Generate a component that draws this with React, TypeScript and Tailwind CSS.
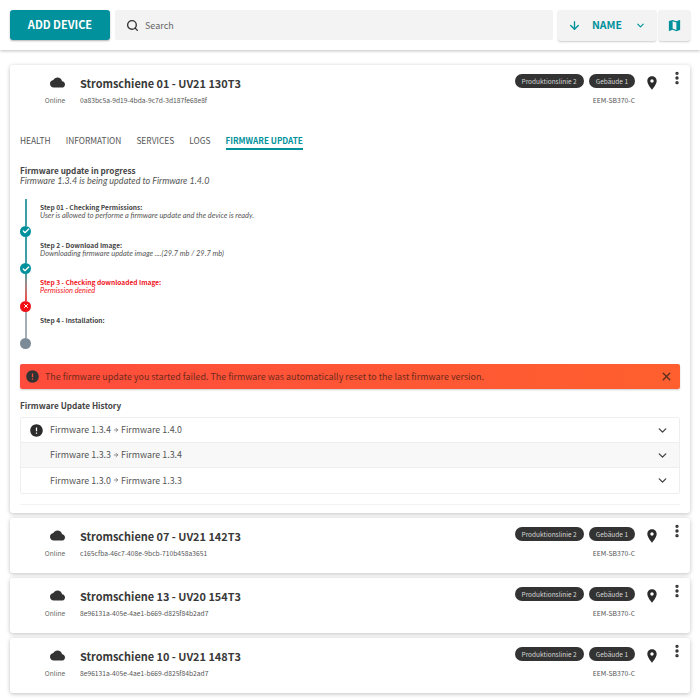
import React from "react";
import { Search, ArrowDown, ArrowRight, ChevronDown, X, Check, EllipsisVertical } from "lucide-react";

const Cloud = ({ className }: { className?: string }) => (
  <svg viewBox="0 0 24 24" className={className} fill="currentColor">
    <path d="M19.35 10.04C18.67 6.59 15.64 4 12 4 9.11 4 6.6 5.64 5.35 8.04 2.34 8.36 0 10.91 0 14c0 3.31 2.69 6 6 6h13c2.76 0 5-2.24 5-5 0-2.64-2.05-4.78-4.65-4.96z" />
  </svg>
);
const Pin = ({ className }: { className?: string }) => (
  <svg viewBox="0 0 24 24" className={className} fill="currentColor">
    <path d="M12 2C8.13 2 5 5.13 5 9c0 5.25 7 13 7 13s7-7.75 7-13c0-3.87-3.13-7-7-7zm0 9.5c-1.38 0-2.5-1.12-2.5-2.5s1.12-2.5 2.5-2.5 2.5 1.12 2.5 2.5-1.12 2.5-2.5 2.5z" />
  </svg>
);
const MapIcon = ({ className }: { className?: string }) => (
  <svg viewBox="0 0 24 24" className={className} fill="currentColor">
    <path d="M20.5 3l-.16.03L15 5.1 9 3 3.36 4.9c-.21.07-.36.25-.36.48V20.5c0 .28.22.5.5.5l.16-.03L9 18.9l6 2.1 5.64-1.9c.21-.07.36-.25.36-.48V3.5c0-.28-.22-.5-.5-.5zM15 19l-6-2.11V5l6 2.11V19z" />
  </svg>
);
const Alert = ({ className }: { className?: string }) => (
  <svg viewBox="0 0 24 24" className={className} fill="currentColor">
    <path d="M12 2C6.48 2 2 6.48 2 12s4.48 10 10 10 10-4.48 10-10S17.52 2 12 2zm1 15h-2v-2h2v2zm0-4h-2V7h2v6z" />
  </svg>
);
const Dots = () => <EllipsisVertical className="w-[16px] h-[16px] text-[#2b2b2b]" strokeWidth={3} />;

function Header({ name, id }: { name: string; id: string }) {
  return (
    <div className="flex h-[55px] items-start">
      <div className="w-[70px] pt-[10px] flex flex-col items-center shrink-0">
        <Cloud className="w-[15px] h-[15px] text-[#333] ml-[25px]" />
        <div className="text-[6.6px] text-[#666] ml-[20px] mt-[4px] leading-[12px]">Online</div>
      </div>
      <div className="pt-[9px] flex-1">
        <div className="text-[10.9px] font-bold text-[#383838] leading-[18px]">{name}</div>
        <div className="text-[6.7px] text-[#555] leading-[12px] mt-[2px]">{id}</div>
      </div>
      <div className="pt-[9px] flex flex-col items-end">
        <div className="flex gap-[5px]">
          <span className="h-[14px] px-[7px] rounded-full bg-[#333] text-[#d5d5d5] text-[6.5px] leading-[14px]">Produktionslinie 2</span>
          <span className="h-[14px] px-[7px] rounded-full bg-[#333] text-[#d5d5d5] text-[6.5px] leading-[14px]">Gebäude 1</span>
        </div>
        <div className="text-[6.8px] text-[#555] leading-[12px] mt-[6px]">EEM-SB370-C</div>
      </div>
      <div className="w-[55px] pt-[10px] pl-[9px] flex shrink-0">
        <Pin className="w-[16px] h-[16px] text-[#2b2b2b]" />
        <div className="ml-[9px] -mt-[5px]"><Dots /></div>
      </div>
    </div>
  );
}

function Step({ title, desc, state, red }: { title: string; desc?: string; state: "ok" | "err" | "idle"; red?: boolean }) {
  const dot = state === "ok" ? "bg-[#00919c]" : state === "err" ? "bg-[#f00f17]" : "bg-[#7c8b96]";
  const line = state === "ok" ? "bg-[#3f9ea5]" : state === "err" ? "bg-gradient-to-b from-[#3f9ea5] to-[#f0414a]" : "bg-[#a3adb4]";
  return (
    <div className="flex h-[37.5px]">
      <div className="w-[11px] flex flex-col items-center shrink-0">
        <div className={`w-[2px] flex-1 ${line}`} />
        <div className={`w-[11px] h-[11px] rounded-full flex items-center justify-center ${dot}`}>
          {state === "ok" && <Check className="w-[8px] h-[8px] text-white" strokeWidth={4} />}
          {state === "err" && <X className="w-[6px] h-[6px] text-white" strokeWidth={4} />}
        </div>
      </div>
      <div className={`pl-[9px] pt-[4px] ${red ? "text-[#f0141c]" : "text-[#444]"}`}>
        <div className="text-[6.6px] font-bold leading-[9px]">{title}</div>
        {desc && <div className={`text-[7.4px] italic leading-[8px] font-['Lato',sans-serif] ${red ? "" : "text-[#555]"}`}>{desc}</div>}
      </div>
    </div>
  );
}

function HistoryRow({ from, to, alert, shade }: { from: string; to: string; alert?: boolean; shade?: boolean }) {
  return (
    <div className={`flex h-[25px] items-center border-b border-[#eee] last:border-b-0 ${shade ? "bg-[#f8f8f8]" : "bg-white"}`}>
      <div className="w-[29px] flex justify-end pr-[6px] shrink-0">
        {alert && <Alert className="w-[15px] h-[15px] text-[#2b2b2b]" />}
      </div>
      <div className="text-[8.9px] text-[#555] flex-1 flex items-center gap-[2px]">
        <span>{from}</span>
        <ArrowRight className="w-[6px] h-[6px] text-[#555]" strokeWidth={2.5} />
        <span>{to}</span>
      </div>
      <ChevronDown className="w-[13px] h-[13px] text-[#444] mr-[10px]" strokeWidth={2.5} />
    </div>
  );
}

function Card({ name, id }: { name: string; id: string }) {
  return (
    <div className="h-[55px] bg-white rounded-[3px] shadow-[0_1px_4px_rgba(0,0,0,0.25)]">
      <Header name={name} id={id} />
    </div>
  );
}

export default function App() {
  return (
    <div className="w-[700px] h-[700px] overflow-hidden bg-white font-['Noto_Sans_CJK_SC','Noto_Sans',sans-serif]">
      <div className="h-[50px] px-[10px] flex items-start pt-[10px] gap-[5px] shadow-[0_1px_3px_rgba(0,0,0,0.25)]">
        <button className="w-[100px] h-[30px] pb-[1px] shrink-0 bg-[#00919c] rounded-[3px] text-white text-[11px] font-bold shadow-[0_1px_2px_rgba(0,0,0,0.3)]">ADD DEVICE</button>
        <div className="w-[438px] h-[30px] shrink-0 bg-[#f3f3f3] flex items-center pl-[11px] rounded-[2px]">
          <Search className="w-[13px] h-[13px] text-[#333]" strokeWidth={2.5} />
          <span className="ml-[6px] pt-[1px] text-[9px] text-[#666]">Search</span>
        </div>
        <div className="w-[98px] h-[31px] shrink-0 bg-[#f3f3f3] rounded-[2px] flex items-center justify-between px-[10px] shadow-[0_1px_2px_rgba(0,0,0,0.2)]">
          <ArrowDown className="w-[13px] h-[13px] text-[#00919c]" strokeWidth={2.5} />
          <span className="text-[#00919c] text-[10.5px] font-bold pb-[1px] pr-[2px]">NAME</span>
          <ChevronDown className="w-[11px] h-[11px] text-[#00919c]" strokeWidth={2.5} />
        </div>
        <div className="w-[31px] h-[31px] shrink-0 ml-[-2px] bg-[#f3f3f3] rounded-[2px] flex items-center justify-center shadow-[0_1px_2px_rgba(0,0,0,0.2)]">
          <MapIcon className="w-[15px] h-[15px] text-[#00919c]" />
        </div>
      </div>

      <div className="px-[10px] pt-[15px] flex flex-col gap-[5px]">
        <div className="h-[448px] bg-white rounded-[3px] shadow-[0_1px_4px_rgba(0,0,0,0.25)]">
          <Header name="Stromschiene 01 - UV21 130T3" id="0a83bc5a-9d19-4bda-9c7d-3d187fe68e8f" />
          <div className="px-[10px]">
            <div className="flex gap-[15px] mt-[13px] text-[8.4px] text-[#555] leading-[14px]">
              <span>HEALTH</span>
              <span>INFORMATION</span>
              <span>SERVICES</span>
              <span>LOGS</span>
              <span className="text-[#00919c] text-[8.2px] font-bold border-b-[2px] border-[#00919c] pb-[1px]">FIRMWARE UPDATE</span>
            </div>
            <div className="text-[8.2px] font-bold text-[#444] leading-[12px] mt-[14px]">Firmware update in progress</div>
            <div className="text-[9px] italic text-[#555] leading-[12px] mt-[-1px] font-['Lato',sans-serif]">Firmware 1.3.4 is being updated to Firmware 1.4.0</div>
            <div className="mt-[12px]">
              <Step state="ok" title="Step 01 - Checking Permissions:" desc="User is allowed to performe a firmware update and the device is ready." />
              <Step state="ok" title="Step 2 - Download Image:" desc="Downloading firmware update image ....(29.7 mb / 29.7 mb)" />
              <Step state="err" red title="Step 3 - Checking downloaded Image:" desc="Permission denied" />
              <Step state="idle" title="Step 4 - Installation:" />
            </div>
            <div className="mt-[15px] h-[25px] bg-gradient-to-r from-[#ff4c3c] to-[#ff5f2e] rounded-[2px] flex items-center pl-[5px] pr-[7px] shadow-[0_1px_2px_rgba(0,0,0,0.2)]">
              <Alert className="w-[15px] h-[15px] text-[#333]" />
              <span className="ml-[5px] text-[8.95px] text-[#6e2a1c] flex-1">The firmware update you started failed. The firmware was automatically reset to the last firmware version.</span>
              <X className="w-[13px] h-[13px] text-[#5a3020]" strokeWidth={2.5} />
            </div>
            <div className="text-[8.2px] font-bold text-[#444] leading-[12px] mt-[10px]">Firmware Update History</div>
            <div className="mt-[6px] border border-[#eee] rounded-[2px]">
              <HistoryRow alert from="Firmware 1.3.4" to="Firmware 1.4.0" />
              <HistoryRow shade from="Firmware 1.3.3" to="Firmware 1.3.4" />
              <HistoryRow from="Firmware 1.3.0" to="Firmware 1.3.3" />
            </div>
            <div className="mt-[10px] border-t border-[#f2f2f2]" />
          </div>
        </div>
        <Card name="Stromschiene 07 - UV21 142T3" id="c165cfba-46c7-408e-9bcb-710b458a3651" />
        <Card name="Stromschiene 13 - UV20 154T3" id="8e96131a-405e-4ae1-b669-d825f84b2ad7" />
        <Card name="Stromschiene 10 - UV21 148T3" id="8e96131a-405e-4ae1-b669-d825f84b2ad7" />
      </div>
    </div>
  );
}
